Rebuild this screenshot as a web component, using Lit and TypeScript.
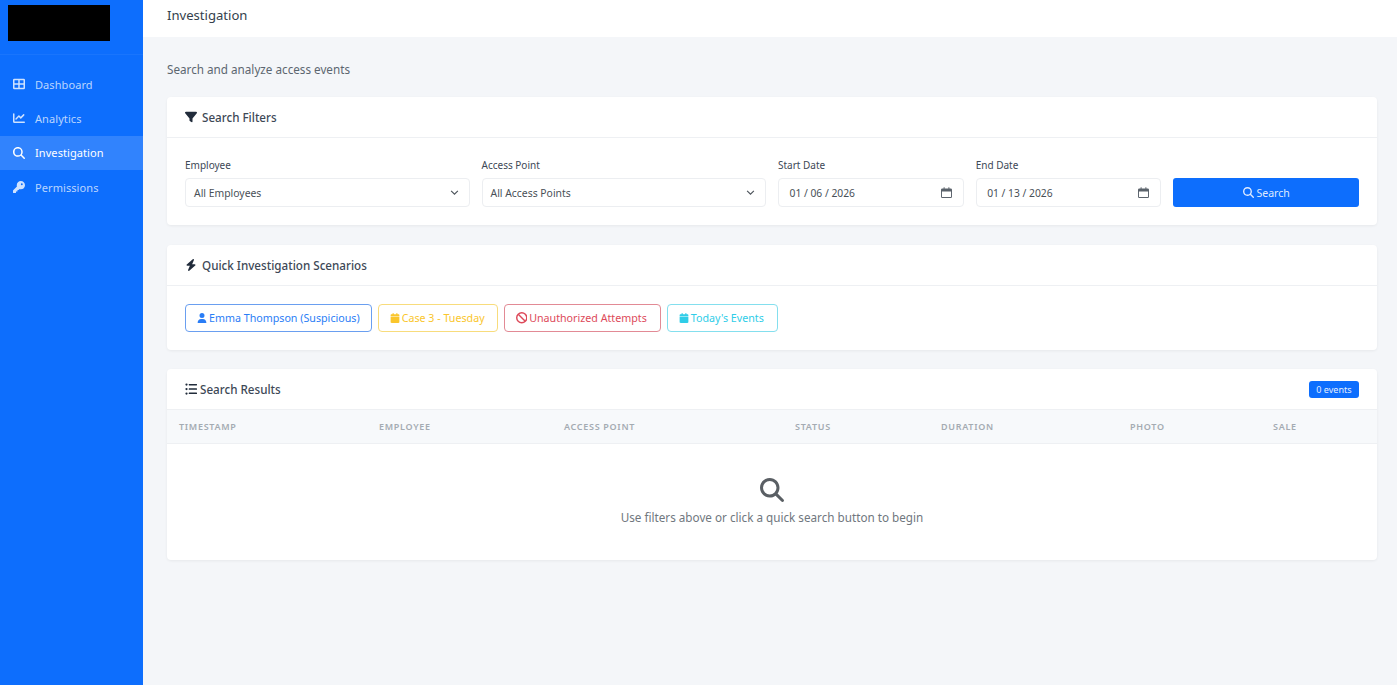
import { LitElement, css, html, svg } from 'lit';
import { customElement, state } from 'lit/decorators.js';

const ICONS: Record<string, [string, string]> = {
  search: ['0 0 512 512', 'M416 208c0 45.9-14.9 88.3-40 122.7L502.6 457.4c12.5 12.5 12.5 32.8 0 45.3s-32.8 12.5-45.3 0L330.7 376c-34.4 25.2-76.8 40-122.7 40C93.1 416 0 322.9 0 208S93.1 0 208 0S416 93.1 416 208zM208 352a144 144 0 1 0 0-288 144 144 0 1 0 0 288z'],
  filter: ['0 0 512 512', 'M3.9 54.9C10.5 40.9 24.5 32 40 32H472c15.5 0 29.5 8.9 36.1 22.9s4.6 30.5-5.2 42.5L320 320.9V448c0 12.1-6.8 23.2-17.7 28.6s-23.8 4.3-33.5-3l-64-48c-8.1-6-12.8-15.5-12.8-25.6V320.9L9 97.3C-.7 85.4-2.8 68.8 3.9 54.9z'],
  bolt: ['0 0 448 512', 'M349.4 44.6c5.9-13.7 1.5-29.7-10.6-38.5s-28.6-8-39.9 1.8l-256 224c-10 8.8-13.6 22.9-8.9 35.3S50.7 288 64 288H175.5L98.6 467.4c-5.9 13.7-1.5 29.7 10.6 38.5s28.6 8 39.9-1.8l256-224c10-8.8 13.6-22.9 8.9-35.3s-16.6-20.7-30-20.7H272.5L349.4 44.6z'],
  user: ['0 0 448 512', 'M224 256A128 128 0 1 0 224 0a128 128 0 1 0 0 256zm-45.7 48C79.8 304 0 383.8 0 482.3C0 498.7 13.3 512 29.7 512H418.3c16.4 0 29.7-13.3 29.7-29.7C448 383.8 368.2 304 269.7 304H178.3z'],
  calendar: ['0 0 448 512', 'M96 32V64H48C21.5 64 0 85.5 0 112v48H448V112c0-26.5-21.5-48-48-48H352V32c0-17.7-14.3-32-32-32s-32 14.3-32 32V64H160V32c0-17.7-14.3-32-32-32S96 14.3 96 32zM448 192H0V464c0 26.5 21.5 48 48 48H400c26.5 0 48-21.5 48-48V192z'],
  ban: ['0 0 512 512', 'M367.2 412.5L99.5 144.8C77.1 176.1 64 214.5 64 256c0 106 86 192 192 192c41.5 0 79.9-13.1 111.2-35.5zm45.3-45.3C434.9 335.9 448 297.5 448 256c0-106-86-192-192-192c-41.5 0-79.9 13.1-111.2 35.5L412.5 367.2zM0 256a256 256 0 1 1 512 0A256 256 0 1 1 0 256z'],
  key: ['0 0 512 512', 'M336 352c97.2 0 176-78.8 176-176S433.2 0 336 0S160 78.8 160 176c0 18.7 2.9 36.8 8.3 53.7L7 391c-4.5 4.5-7 10.6-7 17v80c0 13.3 10.7 24 24 24h80c13.3 0 24-10.7 24-24V448h40c13.3 0 24-10.7 24-24V384h40c6.4 0 12.5-2.5 17-7l33.3-33.3c16.9 5.4 35 8.3 53.7 8.3zM376 96a40 40 0 1 1 0 80 40 40 0 1 1 0-80z'],
  list: ['0 0 512 512', 'M16 64a48 48 0 1 0 96 0 48 48 0 1 0-96 0zM16 256a48 48 0 1 0 96 0 48 48 0 1 0-96 0zM16 448a48 48 0 1 0 96 0 48 48 0 1 0-96 0zM176 40h320a16 16 0 0 1 16 16v32a16 16 0 0 1-16 16H176a16 16 0 0 1-16-16V56a16 16 0 0 1 16-16zM176 224h320a16 16 0 0 1 16 16v32a16 16 0 0 1-16 16H176a16 16 0 0 1-16-16v-32a16 16 0 0 1 16-16zM176 408h320a16 16 0 0 1 16 16v32a16 16 0 0 1-16 16H176a16 16 0 0 1-16-16v-32a16 16 0 0 1 16-16z'],
  grid: ['0 0 512 512', 'M56 32h400a56 56 0 0 1 56 56v336a56 56 0 0 1-56 56H56a56 56 0 0 1-56-56V88a56 56 0 0 1 56-56zM64 96v128h160V96zm224 0v128h160V96zM64 288v128h160V288zm224 0v128h160V288z'],
  chart: ['0 0 512 512', 'M32 48a32 32 0 0 1 32 32v320h416a32 32 0 0 1 0 64H64a64 64 0 0 1-64-64V80a32 32 0 0 1 32-32zM480 144L352 272a32 32 0 0 1-45 0l-55-55-102 102a32 32 0 0 1-45-45l124-125a32 32 0 0 1 46 0l55 55 105-105a32 32 0 0 1 45 45z'],
  chevron: ['0 0 16 16', 'M2 5l6 6 6-6'],
  cal: ['0 0 16 16', 'M4.5 0a.7.7 0 0 1 .7.7V2h5.6V.7a.7.7 0 0 1 1.4 0V2H14a2 2 0 0 1 2 2v10a2 2 0 0 1-2 2H2a2 2 0 0 1-2-2V4a2 2 0 0 1 2-2h1.8V.7a.7.7 0 0 1 .7-.7zM1.4 6.5V14c0 .3.3.6.6.6h12c.3 0 .6-.3.6-.6V6.5z'],
};

function icon(name: string, cls = '') {
  const [box, d] = ICONS[name];
  return svg`<svg class="icon ${cls}" viewBox=${box} aria-hidden="true"><path d=${d}></path></svg>`;
}

@customElement('app-root')
export class AppRoot extends LitElement {
  @state() nav = [
    { label: 'Dashboard', icon: 'grid' },
    { label: 'Analytics', icon: 'chart' },
    { label: 'Investigation', icon: 'search', active: true },
    { label: 'Permissions', icon: 'key' },
  ];
  @state() quick = [
    { label: 'Emma Thompson (Suspicious)', icon: 'user', cls: 'blue' },
    { label: 'Case 3 - Tuesday', icon: 'calendar', cls: 'yellow' },
    { label: 'Unauthorized Attempts', icon: 'ban', cls: 'red' },
    { label: "Today's Events", icon: 'calendar', cls: 'cyan' },
  ];
  @state() columns = ['Timestamp', 'Employee', 'Access Point', 'Status', 'Duration', 'Photo', 'Sale'];

  static styles = css`
    :host {
      display: flex;
      min-height: 685px;
      background: #f4f6f9;
      font-family: 'Noto Sans', sans-serif;
      font-size: 11px;
      color: #495057;
    }
    .icon {
      display: block;
      fill: currentColor;
      flex: none;
    }
    .sidebar {
      width: 143px;
      flex: none;
      background: #0d6efd;
    }
    .brand {
      height: 55px;
      box-sizing: border-box;
      padding: 5px 8px;
      border-bottom: 1px solid rgba(255, 255, 255, 0.05);
      margin-bottom: 12px;
    }
    .logo {
      width: 102px;
      height: 36px;
      background: #000;
    }
    .nav-item {
      height: 34.33px;
      display: flex;
      align-items: center;
      gap: 10px;
      padding-left: 13px;
      color: rgba(255, 255, 255, 0.72);
      letter-spacing: 0.08px;
    }
    .nav-item .icon {
      width: 12px;
      height: 12px;
      color: rgba(255, 255, 255, 0.8);
    }
    .nav-item.active {
      background: rgba(255, 255, 255, 0.15);
      color: #fff;
    }
    .nav-item.active .icon {
      color: #fff;
    }
    .content {
      flex: 1;
      min-width: 0;
    }
    .topbar {
      height: 37px;
      box-sizing: border-box;
      background: #fff;
      padding: 5px 24px 0;
      font-size: 13.1px;
      line-height: 21px;
      color: #343f4d;
    }
    .page {
      padding: 24px 20px 0 24px;
    }
    .subtitle {
      font-size: 11.7px;
      line-height: 17px;
      color: #5c6670;
      margin-bottom: 19px;
    }
    .card {
      background: #fff;
      border-radius: 4px;
      box-shadow: 0 1px 3px rgba(0, 0, 0, 0.06);
      margin-bottom: 19px;
    }
    section.card:first-of-type {
      margin-bottom: 20px;
    }
    .card-head {
      height: 41px;
      box-sizing: border-box;
      display: flex;
      align-items: center;
      padding: 0 18px;
      border-bottom: 1px solid #eef0f3;
      font-size: 11.65px;
      color: #3d4856;
      font-weight: 500;
    }
    .card-head .icon {
      width: 12px;
      height: 12px;
      color: #212c3b;
      margin-right: 5px;
    }
    .card-head .list-icon {
      margin-right: 3px;
    }
    .filters {
      display: grid;
      grid-template-columns: repeat(12, 1fr);
      column-gap: 12px;
      align-items: end;
      padding: 20px 18px 18px;
    }
    .span3 {
      grid-column: span 3;
    }
    .span2 {
      grid-column: span 2;
    }
    label {
      display: block;
      font-size: 10px;
      line-height: 14px;
      margin-bottom: 6px;
      color: #3d4856;
    }
    .field {
      height: 29px;
      box-sizing: border-box;
      display: flex;
      align-items: center;
      justify-content: space-between;
      border: 1px solid #eceef1;
      border-radius: 4px;
      padding: 0 10px 0 8px;
      font-size: 10.4px;
      color: #495057;
    }
    .field.date {
      padding: 0 11px 0 10.5px;
      font-size: 10.3px;
    }
    .chevron {
      width: 9px;
      height: 9px;
      fill: none;
      stroke: #4d545b;
      stroke-width: 2;
    }
    .cal {
      width: 11px;
      height: 11px;
      color: #5a626b;
    }
    .search-btn {
      height: 29px;
      display: flex;
      align-items: center;
      justify-content: center;
      gap: 3px;
      border: none;
      border-radius: 3px;
      background: #0d6efd;
      color: #dfeaff;
      font: inherit;
      font-size: 10.5px;
    }
    .search-btn .icon {
      width: 11px;
      height: 11px;
    }
    .quick {
      display: flex;
      gap: 6px;
      padding: 18px;
    }
    .qbtn {
      height: 28px;
      box-sizing: border-box;
      display: flex;
      align-items: center;
      gap: 2px;
      padding: 0 11px;
      border: 1px solid;
      border-radius: 4px;
      background: #fff;
      font: inherit;
      font-size: 10.7px;
    }
    .qbtn .icon {
      width: 10px;
      height: 10px;
    }
    .qbtn.red .icon {
      width: 11.5px;
      height: 11.5px;
    }
    .blue {
      color: #2a7df6;
      border-color: #6a9ff0;
    }
    .yellow {
      color: #fac62c;
      border-color: #f8dc7c;
      padding-right: 12px;
    }
    .red {
      color: #dd4a5a;
      border-color: #e28a95;
      padding-right: 13px;
    }
    .cyan {
      color: #2fcde8;
      border-color: #84dfee;
      padding-right: 13px;
    }
    .badge {
      margin-left: auto;
      background: #0d6efd;
      color: #e3edff;
      font-size: 9px;
      font-weight: 400;
      line-height: 17px;
      padding: 0 7.5px;
      border-radius: 3px;
    }
    .thead {
      display: grid;
      grid-template-columns: 200px 185px 231px 146px 189px 143px 116px;
      height: 33px;
      align-items: center;
      background: #f7f9fb;
      border-bottom: 1px solid #eef0f3;
      font-size: 9px;
      font-weight: 600;
      letter-spacing: 0.7px;
      text-transform: uppercase;
      color: #a4abb2;
    }
    .thead div {
      padding-left: 12px;
    }
    .empty {
      height: 116px;
      display: flex;
      flex-direction: column;
      align-items: center;
      padding-top: 34px;
      box-sizing: border-box;
      font-size: 11.7px;
      color: #70777e;
    }
    .empty .icon {
      width: 24px;
      height: 24px;
      color: #5a5f64;
      margin-bottom: 7px;
    }
  `;

  render() {
    return html`
      <aside class="sidebar">
        <div class="brand"><div class="logo"></div></div>
        ${this.nav.map(
          (n) => html`<div class="nav-item ${n.active ? 'active' : ''}">${icon(n.icon)}<span>${n.label}</span></div>`
        )}
      </aside>
      <div class="content">
        <div class="topbar">Investigation</div>
        <div class="page">
          <div class="subtitle">Search and analyze access events</div>

          <section class="card">
            <div class="card-head">${icon('filter')}Search Filters</div>
            <div class="filters">
              <div class="span3">
                <label>Employee</label>
                <div class="field">All Employees ${icon('chevron', 'chevron')}</div>
              </div>
              <div class="span3">
                <label>Access Point</label>
                <div class="field">All Access Points ${icon('chevron', 'chevron')}</div>
              </div>
              <div class="span2">
                <label>Start Date</label>
                <div class="field date">01 / 06 / 2026 ${icon('cal', 'cal')}</div>
              </div>
              <div class="span2">
                <label>End Date</label>
                <div class="field date">01 / 13 / 2026 ${icon('cal', 'cal')}</div>
              </div>
              <button class="search-btn span2">${icon('search')}Search</button>
            </div>
          </section>

          <section class="card">
            <div class="card-head">${icon('bolt')}Quick Investigation Scenarios</div>
            <div class="quick">
              ${this.quick.map(
                (q) => html`<button class="qbtn ${q.cls}">${icon(q.icon)}${q.label}</button>`
              )}
            </div>
          </section>

          <section class="card">
            <div class="card-head">
              ${icon('list', 'list-icon')}Search Results
              <span class="badge">0 events</span>
            </div>
            <div class="thead">${this.columns.map((c) => html`<div>${c}</div>`)}</div>
            <div class="empty">
              ${icon('search')}
              <span>Use filters above or click a quick search button to begin</span>
            </div>
          </section>
        </div>
      </div>
    `;
  }
}
